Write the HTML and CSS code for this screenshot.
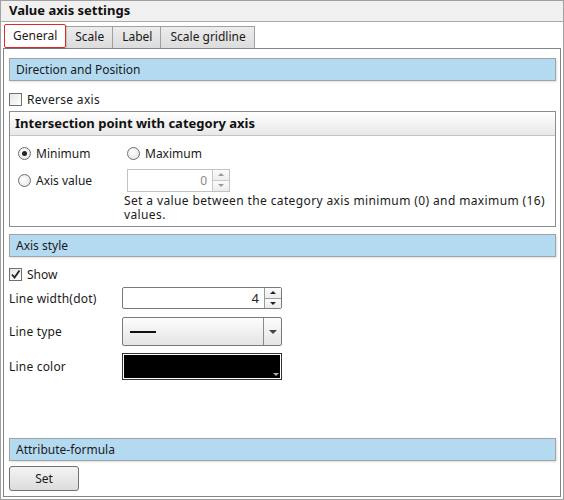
FILE: index.html
```html
<!DOCTYPE html>
<html>
<head>
<meta charset="utf-8">
<link rel="stylesheet" href="styles.css">
</head>
<body>
<div class="window">
  <div class="titlebar">Value axis settings</div>
  <div class="tabs">
    <div class="tab tab-active">General</div>
    <div class="tab">Scale</div>
    <div class="tab">Label</div>
    <div class="tab">Scale gridline</div>
  </div>
  <div class="panel">
    <div class="section">Direction and Position</div>
    <label class="check-row row-reverse"><span class="checkbox"></span>Reverse axis</label>
    <div class="group">
      <div class="group-head">Intersection point with category axis</div>
      <div class="group-body">
        <div class="radio-line">
          <label class="radio-item col1"><span class="radio radio-on"></span>Minimum</label>
          <label class="radio-item"><span class="radio"></span>Maximum</label>
        </div>
        <div class="radio-line line2">
          <label class="radio-item col1"><span class="radio"></span>Axis value</label>
          <div class="spin spin-disabled">
            <span class="spin-val">0</span>
            <span class="spin-btns"><span class="sb sb-up"><i class="up"></i></span><span class="sb"><i class="down"></i></span></span>
          </div>
        </div>
        <div class="help">Set a value between the category axis minimum (0) and maximum (16) values.</div>
      </div>
    </div>
    <div class="section sec-axis">Axis style</div>
    <label class="check-row row-show"><span class="checkbox checked"><svg width="11" height="11" viewBox="0 0 11 11"><path d="M2 5.5 L4.5 8.5 L9.5 1.5" fill="none" stroke="#222" stroke-width="1.8"/></svg></span>Show</label>
    <div class="field field-width">
      <span class="flabel">Line width(dot)</span>
      <div class="spin spin-main">
        <span class="spin-val">4</span>
        <span class="spin-btns"><span class="sb sb-up"><i class="up"></i></span><span class="sb"><i class="down"></i></span></span>
      </div>
    </div>
    <div class="field field-type">
      <span class="flabel">Line type</span>
      <div class="select">
        <span class="select-val"><span class="line-sample"></span></span>
        <span class="select-btn"><i class="down"></i></span>
      </div>
    </div>
    <div class="field field-color">
      <span class="flabel">Line color</span>
      <div class="color"><span class="color-fill"></span><i class="color-arrow"></i></div>
    </div>
    <div class="spacer"></div>
    <div class="section sec-attr">Attribute-formula</div>
    <button class="btn">Set</button>
  </div>
</div>
</body>
</html>
```
FILE: styles.css
```css
* { box-sizing: border-box; }
html, body { margin: 0; padding: 0; background: #fff; }
body {
  font-family: "Noto Sans", "Open Sans", sans-serif;
  font-size: 12px;
  color: #1a1a1a;
}
.window {
  width: 564px;
  height: 500px;
  border: 1px solid #a0a0a0;
  display: flex;
  flex-direction: column;
  background: #fff;
}
.titlebar {
  height: 21px;
  line-height: 19px;
  background: #f0f0f0;
  border-bottom: 1px solid #a8a8a8;
  padding-left: 8px;
  font-weight: bold;
  font-size: 13px;
  color: #111;
}
.tabs {
  display: flex;
  align-items: flex-end;
  padding-left: 3px;
  height: 26px;
}
.tab {
  height: 22px;
  line-height: 20px;
  padding: 0 8px 0 9px;
  border: 1px solid #a0a0a0;
  border-bottom: none;
  border-left: none;
  background: linear-gradient(#ececec, #dcdcdc);
  color: #1a1a1a;
  font-size: 12px;
}
.tab-active {
  height: 24px;
  line-height: 22px;
  background: #fff;
  border: 1px solid #e02828;
  border-radius: 2px;
  padding: 0 8px;
  margin-right: 0;
  box-shadow: 1px 1px 1px rgba(0,0,0,0.15);
  position: relative;
  z-index: 1;
}
.panel {
  flex: 1;
  margin: 0 2px 2px 2px;
  border: 1px solid #858585;
  padding: 9px 4px 5px 5px;
  display: flex;
  flex-direction: column;
}
.section {
  height: 23px;
  line-height: 21px;
  background: #b4daf2;
  border: 1px solid #a2a2a2;
  padding-left: 6px;
  box-shadow: 1px 1px 2px rgba(0,0,0,0.12);
  flex: none;
  color: #1a1a1a;
}
.check-row {
  display: flex;
  align-items: center;
  height: 18px;
}
.checkbox {
  width: 13px;
  height: 13px;
  border: 1px solid #707070;
  background: linear-gradient(135deg, #e6e6e6, #fff);
  margin-right: 5px;
  display: flex;
  align-items: center;
  justify-content: center;
  flex: none;
}
.checkbox svg { display: block; }
.row-reverse { margin-top: 9px; margin-bottom: 3px; letter-spacing: 0.3px; }
.group {
  border: 1px solid #8c8c8c;
  flex: none;
}
.group-head {
  height: 24px;
  line-height: 22px;
  padding-left: 5px;
  font-weight: bold;
  font-size: 13px;
  background: linear-gradient(#ffffff, #e8e8e8);
  border-bottom: 1px solid #c4c4c4;
  color: #111;
}
.group-body {
  padding: 7px 0 4px 8px;
}
.radio-line {
  display: flex;
  align-items: center;
  height: 20px;
}
.line2 { margin-top: 5px; height: 24px; }
.radio-item {
  display: flex;
  align-items: center;
}
.col1 { width: 109px; }
.radio {
  width: 13px;
  height: 13px;
  border-radius: 50%;
  border: 1px solid #6c6c6c;
  background: radial-gradient(circle at 40% 40%, #fff, #e0e0e0);
  margin-right: 5px;
  display: flex;
  align-items: center;
  justify-content: center;
}
.radio-on::after {
  content: "";
  width: 5px;
  height: 5px;
  border-radius: 50%;
  background: #222;
}
.spin {
  display: flex;
  border: 1px solid #c2c2c2;
  height: 23px;
  background: #fff;
}
.spin-disabled { width: 103px; }
.spin-val {
  flex: 1;
  text-align: right;
  padding-right: 5px;
  line-height: 21px;
}
.spin-disabled .spin-val { color: #8a8a8a; }
.spin-btns {
  width: 17px;
  border-left: 1px solid #c8c8c8;
  display: flex;
  flex-direction: column;
}
.sb {
  flex: 1;
  display: flex;
  align-items: center;
  justify-content: center;
  background: linear-gradient(#fbfbfb, #ececec);
}
.sb-up { border-bottom: 1px solid #c8c8c8; }
i.up, i.down {
  display: block;
  width: 0;
  height: 0;
  border-left: 3px solid transparent;
  border-right: 3px solid transparent;
}
i.up { border-bottom: 3px solid #9a9a9a; }
i.down { border-top: 3px solid #9a9a9a; }
.spin-main i.up { border-bottom-color: #222; }
.spin-main i.down { border-top-color: #222; }
.help {
  margin-top: 2px;
  margin-left: 106px;
  line-height: 14px;
  letter-spacing: 0.38px;
}
.sec-axis { margin-top: 7px; }
.row-show { margin-top: 8px; }
.field {
  display: flex;
  align-items: center;
}
.flabel { width: 113px; letter-spacing: 0.2px; }
.field-width { margin-top: 4px; }
.spin-main {
  width: 160px;
  height: 22px;
  border-color: #7a7a7a;
  border-radius: 2px;
}
.spin-main .spin-val { color: #222; font-size: 13px; line-height: 20px; }
.spin-main .spin-btns, .spin-main .sb-up { border-color: #9a9a9a; }
.field-type { margin-top: 8px; }
.select {
  width: 160px;
  height: 29px;
  border: 1px solid #7a7a7a;
  border-radius: 2px;
  display: flex;
  background: linear-gradient(#fdfdfd, #e4e4e4);
}
.select-val {
  flex: 1;
  display: flex;
  align-items: center;
  padding-left: 7px;
}
.line-sample {
  width: 26px;
  height: 2px;
  background: #111;
}
.select-btn {
  width: 18px;
  border-left: 1px solid #8a8a8a;
  display: flex;
  align-items: center;
  justify-content: center;
}
.select-btn i.down { border-top: 4px solid #444; border-left-width: 4px; border-right-width: 4px; }
.field-color { margin-top: 7px; }
.color {
  width: 160px;
  height: 27px;
  border: 1px solid #333;
  padding: 1px;
  background: #fff;
  position: relative;
  display: flex;
}
.color-fill { flex: 1; background: #000; }
.color-arrow {
  position: absolute;
  right: 1px;
  bottom: 1px;
  width: 9px;
  height: 6px;
  background: #000;
  display: flex;
}
.color-arrow::after {
  content: "";
  margin: 1px auto 0;
  border-left: 3px solid transparent;
  border-right: 3px solid transparent;
  border-top: 3px solid #b0b0b0;
  height: 0;
  width: 0;
}
.spacer { flex: 1; }
.sec-attr { margin-bottom: 5px; }
.btn {
  width: 70px;
  height: 25px;
  border: 1px solid #707070;
  border-radius: 3px;
  background: linear-gradient(#f4f4f4, #dcdcdc);
  font-family: "Noto Sans", "Open Sans", sans-serif;
  font-size: 12px;
  color: #1a1a1a;
  padding: 0;
  margin-bottom: 0;
}
```
